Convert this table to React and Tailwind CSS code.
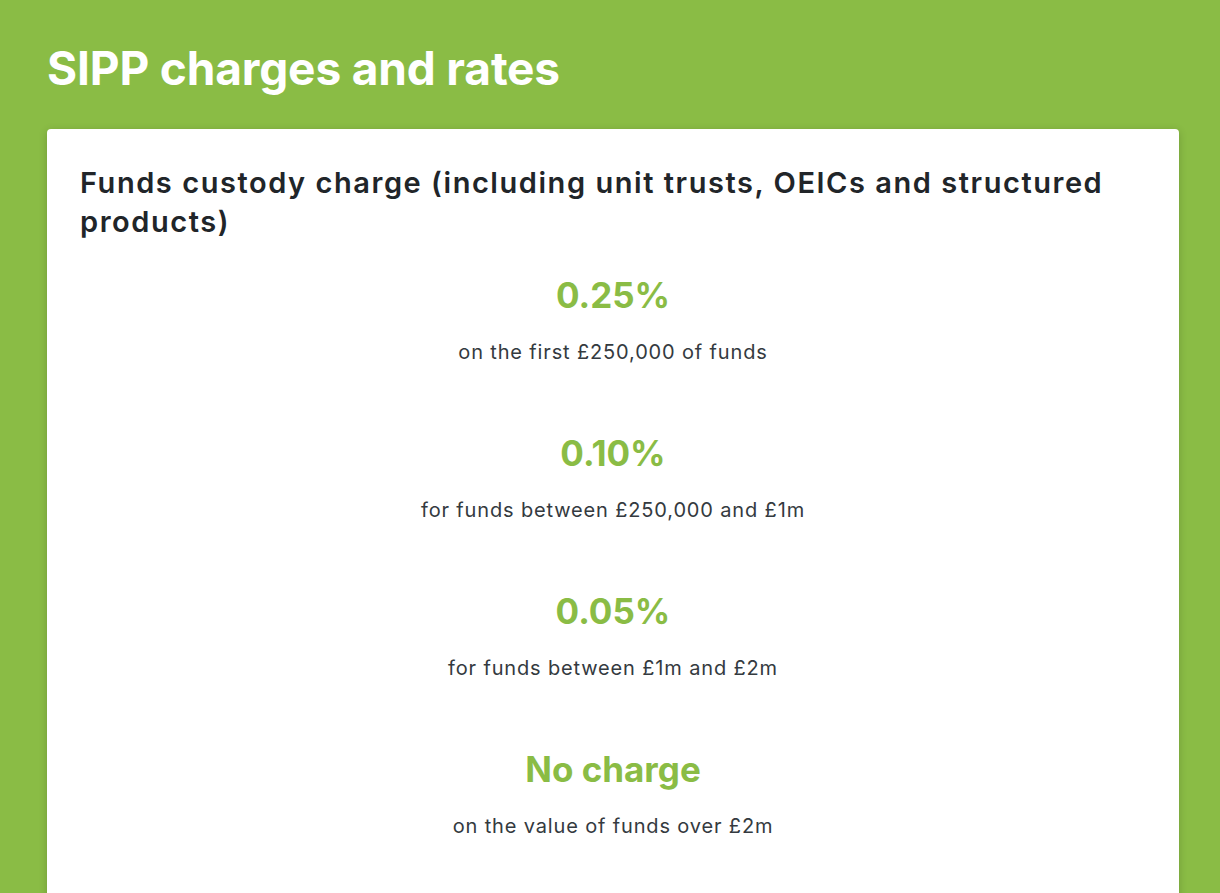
const rates = [
  { value: '0.25%', label: 'on the first £250,000 of funds' },
  { value: '0.10%', label: 'for funds between £250,000 and £1m' },
  { value: '0.05%', label: 'for funds between £1m and £2m' },
  { value: 'No charge', label: 'on the value of funds over £2m' },
];

const App = () => {
  return (
    <div className="min-h-screen bg-[#8abc45] pl-[47px] pr-[41px] pt-[40px] font-['Inter',sans-serif]">
      <h1 className="text-[46px] leading-[56px] font-bold text-white tracking-[-0.15px]">
        SIPP charges and rates
      </h1>

      <div className="mt-[33px] bg-white rounded shadow-[0_2px_8px_rgba(0,0,0,0.18)] px-[33px] pt-[34px]">
        <h2 className="text-[29px] leading-[39px] font-semibold text-[#212529] tracking-[1.55px]">
          Funds custody charge (including unit trusts, OEICs and structured products)
        </h2>

        <div className="mt-[34px] flex flex-col items-center">
          {rates.map((rate) => (
            <div key={rate.value} className="flex flex-col items-center mb-[67px]">
              <div className="text-[35px] leading-[40px] font-bold text-[#8abc45]">{rate.value}</div>
              <div className="mt-[23px] text-[20px] leading-[28px] text-[#343a40] tracking-[0.85px]">
                {rate.label}
              </div>
            </div>
          ))}
        </div>
      </div>
    </div>
  );
};

export default App;
